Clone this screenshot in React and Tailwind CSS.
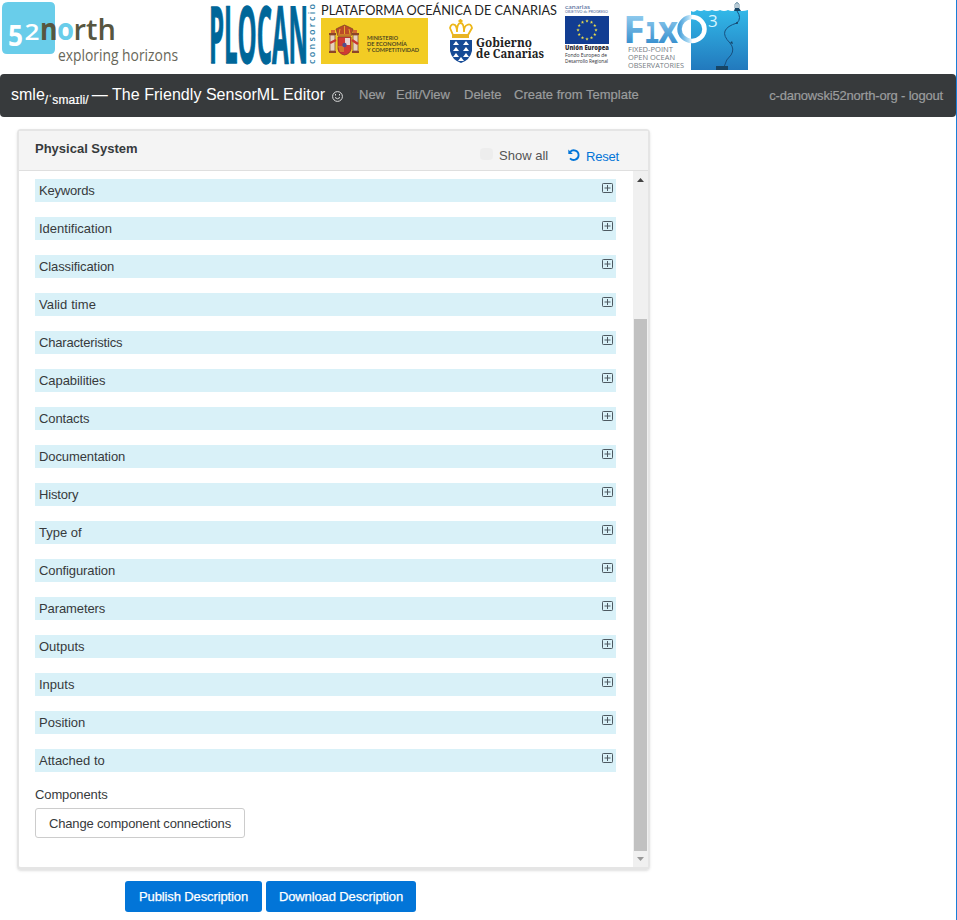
import React from 'react';

const sections = [
  { name: 'Keywords', tracking: 'tracking-[-0.200px]' },
  { name: 'Identification', tracking: '' },
  { name: 'Classification', tracking: 'tracking-[-0.100px]' },
  { name: 'Valid time', tracking: 'tracking-[0.100px]' },
  { name: 'Characteristics', tracking: 'tracking-[-0.180px]' },
  { name: 'Capabilities', tracking: 'tracking-[-0.060px]' },
  { name: 'Contacts', tracking: 'tracking-[-0.120px]' },
  { name: 'Documentation', tracking: 'tracking-[-0.100px]' },
  { name: 'History', tracking: 'tracking-[-0.150px]' },
  { name: 'Type of', tracking: '' },
  { name: 'Configuration', tracking: 'tracking-[-0.100px]' },
  { name: 'Parameters', tracking: 'tracking-[-0.100px]' },
  { name: 'Outputs', tracking: '' },
  { name: 'Inputs', tracking: '' },
  { name: 'Position', tracking: '' },
  { name: 'Attached to', tracking: '' },
];

function NorthLogo() {
  return (
    <svg className="h-[74px] w-[200px] shrink-0" viewBox="0 0 200 74" fontFamily="'Open Sans', sans-serif">
      <path d="M8 2H50Q55 2 55 7V49Q55 54 50 54H7Q2 54 2 49V8Q2 2 8 2Z" fill="#69cdea" />
      <text x="8" y="46" fontSize="29" fontWeight="700" fill="#fff" textLength="15" lengthAdjust="spacingAndGlyphs">5</text>
      <text x="24.500" y="40" fontSize="22" fontWeight="600" fill="#fff" textLength="15" lengthAdjust="spacingAndGlyphs">2</text>
      <g fontSize="29.500" fontWeight="600" fill="#575640">
        <text x="40" y="40" fontWeight="700" textLength="17.500" lengthAdjust="spacingAndGlyphs">n</text>
        <text x="57" y="40" fontWeight="700" fill="#69cdea" textLength="17" lengthAdjust="spacingAndGlyphs">o</text>
        <text x="73.500" y="40" textLength="42.500" lengthAdjust="spacingAndGlyphs">rth</text>
      </g>
      <text x="58" y="61" fontSize="15.500" fill="#68675a" textLength="120" lengthAdjust="spacingAndGlyphs">exploring horizons</text>
    </svg>
  );
}

function PlocanLogo() {
  return (
    <svg className="h-[74px] w-[120px] shrink-0" viewBox="200 0 120 74" fontFamily="'Open Sans', sans-serif">
      <text transform="translate(209 63) scale(0.500 1.600)" fontSize="49" fontWeight="700" fill="#006699" stroke="#006699" strokeWidth=".8" textLength="198" lengthAdjust="spacingAndGlyphs">PLOCAN</text>
      <text transform="translate(315 64) rotate(-90)" fontSize="9" fontWeight="600" fill="#347fa8" textLength="60" lengthAdjust="spacing">consorcio</text>
    </svg>
  );
}

function SpanishArms() {
  return (
    <g>
      <path d="M330 35H335V51H330ZM353 35H358V51H353Z" fill="#e8d3bd" stroke="#8b5139" strokeWidth=".8" />
      <path d="M329 34H336M329 52H336M352 34H359M352 52H359" stroke="#8d4527" strokeWidth="2" />
      <path d="M331 33V30H335V33M353 33V30H357V33" fill="#d46b32" />
      <path d="M330 43L336 40M352 40L358 44" stroke="#c9372f" strokeWidth="2.500" />
      <path d="M338 37H351V49Q350 54 344.500 55Q339 54 338 49Z" fill="#d13b34" stroke="#8b3430" strokeWidth=".8" />
      <path d="M345 38H350V45H345Z" fill="#ead5d1" />
      <path d="M338 46H344V52H340Z" fill="#e3a22a" />
      <path d="M339 46V52M341 46V53M343 46V53" stroke="#b52c2f" strokeWidth=".7" />
      <circle cx="344.500" cy="45" r="2.200" fill="#52518e" />
      <path d="M338 36L336 29L340 27L344.500 25L349 27L353 29L351 36Z" fill="#ba4b28" stroke="#784225" strokeWidth=".7" />
      <path d="M339 34L340 29M344.500 34V26M350 34L349 29M338 35H351" stroke="#e7a928" />
    </g>
  );
}

function PartnerLogos() {
  return (
    <svg className="h-[74px] w-[300px] shrink-0" viewBox="320 0 300 74">
      <text x="321" y="14.500" fontFamily="Lato, sans-serif" fontSize="14" fill="#222" textLength="236" lengthAdjust="spacingAndGlyphs">PLATAFORMA OCEÁNICA DE CANARIAS</text>
      <path d="M321 18H428V64H321Z" fill="#f2cc24" />
      <SpanishArms />
      <g fontFamily="Lato, sans-serif" fontSize="6" fontWeight="600" fill="#3b3720">
        <text x="367" y="40" textLength="31" lengthAdjust="spacingAndGlyphs">MINISTERIO</text>
        <text x="367" y="46" textLength="40" lengthAdjust="spacingAndGlyphs">DE ECONOMÍA</text>
        <text x="367" y="52" textLength="52" lengthAdjust="spacingAndGlyphs">Y COMPETITIVIDAD</text>
      </g>
      <path d="M450 40H472V51Q470 60 461 63Q452 60 450 51Z" fill="#164b96" />
      <path d="M453 45L456 41L459 45ZM463 45L466 41L469 45ZM453 51L456 47L459 51ZM463 51L466 47L469 51ZM453 57L456 53L459 57ZM463 57L466 53L469 57ZM458 61L461 57L464 61Z" fill="#fff" />
      <path d="M453 35L450 28Q451 23 455 25Q457 27 457 32Q457 23 460.500 23Q464 23 464 32Q464 26 467 25Q471 23 472 28L468 35ZM460.500 23V19M458.500 21H462.500" fill="none" stroke="#edb719" strokeWidth="1.800" />
      <path d="M452 34H469V38H452Z" fill="#e9b524" />
      <g fontFamily="'Noto Serif', 'DejaVu Serif', serif" fontSize="12" fontWeight="700" fill="#222">
        <text x="476" y="47" textLength="56" lengthAdjust="spacingAndGlyphs">Gobierno</text>
        <text x="476" y="58" textLength="68" lengthAdjust="spacingAndGlyphs">de Canarias</text>
      </g>
      <g fontFamily="Lato, sans-serif" fill="#476293">
        <text x="565" y="9" fontSize="6.500" textLength="25" lengthAdjust="spacingAndGlyphs">canarias</text>
        <text x="565" y="13" fontSize="4" textLength="43" lengthAdjust="spacingAndGlyphs">OBJETIVO de PROGRESO</text>
      </g>
      <path d="M565 16H609V44H565Z" fill="#123d92" />
      <g fill="#e9dd4c">
        {Array.from({ length: 12 }, (_, index) => (
          <path key={index} transform={`translate(${587 + Math.sin(index * Math.PI / 6) * 9} ${30 - Math.cos(index * Math.PI / 6) * 9})`} d="M0 -1.700L.5 -.5H1.700L.7 .3L1 1.500L0 .8L-1 1.500L-.7 .3L-1.700 -.5H-.5Z" />
        ))}
      </g>
      <g fontFamily="'Open Sans', sans-serif" fill="#2b2c35">
        <text x="565" y="50" fontSize="6" fontWeight="800" textLength="44" lengthAdjust="spacingAndGlyphs">Unión Europea</text>
        <text x="565" y="57" fontSize="5.300" textLength="42" lengthAdjust="spacingAndGlyphs">Fondo Europeo de</text>
        <text x="565" y="63" fontSize="5.300" textLength="43" lengthAdjust="spacingAndGlyphs">Desarrollo Regional</text>
      </g>
    </svg>
  );
}

function FixLogo() {
  return (
    <svg className="h-[74px] w-[140px] shrink-0" viewBox="620 0 140 74" fontFamily="'Open Sans', sans-serif">
      <defs>
        <linearGradient id="ocean" x1="0" y1="0" x2="0" y2="1"><stop stopColor="#32b8e8" /><stop offset="1" stopColor="#2279bd" /></linearGradient>
        <linearGradient id="wordmark" gradientUnits="userSpaceOnUse" x1="0" y1="14" x2="0" y2="44"><stop stopColor="#93cdef" /><stop offset="1" stopColor="#378fce" /></linearGradient>
        <linearGradient id="ring"><stop offset="0" stopColor="#4aa1da" /><stop offset=".35" stopColor="#a8d8f3" /><stop offset=".52" stopColor="#fff" /></linearGradient>
      </defs>
      <path d="M691 11Q694 13 697 10Q701 12 704 10Q708 12 712 10Q716 12 720 10Q724 12 728 10Q732 12 736 10Q742 12 748 10V70H691Z" fill="url(#ocean)" />
      <text x="623" y="43" fontSize="38" fontWeight="700" fill="url(#wordmark)" textLength="22" lengthAdjust="spacingAndGlyphs">F</text>
      <text x="644.500" y="43" fontFamily="'DejaVu Sans Mono', monospace" fontSize="37" fontWeight="700" fill="url(#wordmark)" textLength="14.500" lengthAdjust="spacingAndGlyphs">ı</text>
      <text x="658" y="43" fontSize="38" fontWeight="700" fill="url(#wordmark)" textLength="20" lengthAdjust="spacingAndGlyphs">x</text>
      <ellipse cx="692" cy="29" rx="12.500" ry="12" fill="none" stroke="url(#ring)" strokeWidth="4.500" />
      <text x="708" y="27" fontSize="17" fill="#d9f5ff">3</text>
      <g fontSize="8" fill="#747b82">
        <text x="628" y="52" textLength="45" lengthAdjust="spacingAndGlyphs">FIXED-POINT</text>
        <text x="628" y="60" textLength="47" lengthAdjust="spacingAndGlyphs">OPEN OCEAN</text>
        <text x="628" y="68" textLength="56" lengthAdjust="spacingAndGlyphs">OBSERVATORIES</text>
      </g>
      <path d="M737 11Q742 18 737 23Q727 26 725 31Q723 36 730 43Q735 49 731 55Q726 59 724 67" fill="none" stroke="#174f7e" strokeWidth="1" />
      <path d="M716 66H728V70H716ZM734 11L735 8H739L741 11ZM730 43L732 41L733 44Z" fill="#174566" />
      <path d="M735 8V4Q737 1 739 4V8M737 2V8" fill="none" stroke="#7195aa" />
      <circle cx="737" cy="23" r="1" fill="#174566" />
    </svg>
  );
}

function ExpandIcon() {
  return (
    <svg className="h-[11px] w-[11px]" viewBox="0 0 11 11" fill="none">
      <rect x=".5" y=".5" width="10" height="9" rx=".8" stroke="#4d5961" />
      <path d="M2.500 5H8.500M5.500 2V8" stroke="#4d5961" />
    </svg>
  );
}

function SystemPanel() {
  return (
    <section className="ml-[17px] mt-3 flex h-[741px] w-[633px] flex-col rounded border-x-2 border-t-2 border-b-[3px] border-[#e5e5e5] shadow-sm">
      <div className="flex h-10 shrink-0 items-start border-b border-[#dfdfdf] bg-[#f4f4f4] pl-4 pr-[29px] text-[13px] leading-4">
        <h1 className="mt-[10px] font-bold">Physical System</h1>
        <div className="ml-auto flex items-start">
          <span className="mt-[17px] h-3 w-[13px] rounded-sm bg-[#ededed]" />
          <span className="ml-[6px] mt-[17px] w-[69px] text-[#555]">Show all</span>
          <svg className="mt-[18px] h-3 w-3 text-[#0275d8]" viewBox="0 0 12 12" fill="none">
            <path d="M2.200 2.800C5 -.3 10.600 1.600 10.600 6C10.600 10.700 5 12.600 2 9.300" stroke="currentColor" strokeWidth="1.800" />
            <path d="M.3 .5V5H4.800Z" fill="currentColor" />
          </svg>
          <span className="ml-[6px] mt-[18px] tracking-[-0.200px] text-[#0275d8]">Reset</span>
        </div>
      </div>
      <div className="flex min-h-0 flex-1">
        <div className="flex-1 pl-4 pt-2 text-[13px]">
          <div className="flex w-[581px] flex-col gap-[15px]">
            {sections.map((section) => (
              <div key={section.name} className="flex h-[23px] items-start justify-between bg-[#d9f1f8] pl-1 pr-[3px] pt-1">
                <span className={`leading-4 ${section.tracking}`}>{section.name}</span>
                <ExpandIcon />
              </div>
            ))}
          </div>
          <p className="mt-[15px] leading-4 tracking-[-0.120px]">Components</p>
          <button className="mt-[5px] h-[30px] w-[210px] rounded-[3px] border border-[#ccc] bg-white pt-px text-[13px] tracking-[-0.160px]">Change component connections</button>
        </div>
        <div className="flex w-[15px] flex-col items-center bg-[#f0f0f0]">
          <svg className="mt-[7px] h-1 w-[7px]" viewBox="0 0 7 4"><path d="M0 4L3.500 0L7 4Z" fill="#444" /></svg>
          <div className="mt-[137px] h-[532px] w-[13px] bg-[#c1c1c1]" />
          <svg className="mt-[6px] h-1 w-[7px]" viewBox="0 0 7 4"><path d="M0 0H7L3.500 4Z" fill="#999" /></svg>
        </div>
      </div>
    </section>
  );
}

export default function App() {
  return (
    <div className="h-[920px] w-[957px] overflow-hidden border-r border-[#187fd8] bg-white font-['Liberation_Sans',Arial,sans-serif] text-[#373a3c]">
      <header className="flex h-[74px]">
        <NorthLogo />
        <PlocanLogo />
        <PartnerLogos />
        <FixLogo />
      </header>
      <nav className="flex h-[43px] items-start rounded bg-[#373a3c] pl-[11px] pr-[13px] pt-[11px] text-[13px] leading-5 text-[#9b9d9e] [-webkit-text-stroke:0.2px]">
        <div className="flex h-5 w-[348px] text-base leading-[19px] text-white [-webkit-text-stroke:0px]">
          <span>smle</span>
          <span className="mt-[6px] w-[47px] text-xs leading-[19px] tracking-[0.100px] [-webkit-text-stroke:0.200px]">/ˈsmaɪli/</span>
          <span className="whitespace-nowrap tracking-[0.040px]">— The Friendly SensorML Editor</span>
          <svg className="ml-[7px] mt-[6px] h-[11px] w-[11px]" viewBox="0 0 11 11" fill="none" stroke="#ddd">
            <circle cx="5.500" cy="5.500" r="4.900" />
            <path d="M3 6.500Q5.500 9 8 6.500M3.500 3V4.500M7.500 3V4.500" />
          </svg>
        </div>
        <div className="flex">
          <span className="w-[37px]">New</span>
          <span className="w-[68px]">Edit/View</span>
          <span className="w-[50px]">Delete</span>
          <span className="whitespace-nowrap">Create from Template</span>
        </div>
        <span className="ml-auto mt-px whitespace-nowrap tracking-[-0.180px]">c-danowski52north-org - logout</span>
      </nav>
      <SystemPanel />
      <div className="ml-[125px] mt-[11px] flex gap-1 text-[13px] tracking-[-0.120px] text-white [-webkit-text-stroke:0.250px]">
        <button className="h-[31px] w-[137px] rounded-[3px] bg-[#0275d8] font-normal">Publish Description</button>
        <button className="h-[31px] w-[150px] rounded-[3px] bg-[#0275d8] font-normal">Download Description</button>
      </div>
    </div>
  );
}
